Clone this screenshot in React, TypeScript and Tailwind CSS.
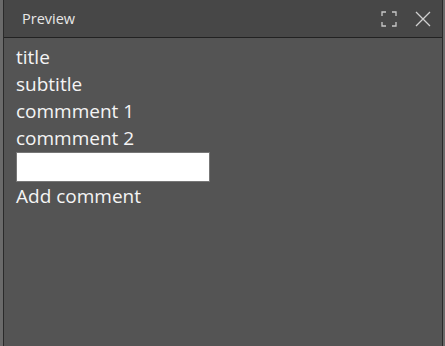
export default function App() {
  const items = ["title", "subtitle", "commment 1", "commment 2"];
  return (
    <div className="w-[445px] h-[346px] bg-[#6a6a6a] flex overflow-hidden" style={{ fontFamily: '"Open Sans", "Noto Sans", sans-serif' }}>
      <div className="ml-[3px] w-[440px] h-full flex flex-col border-x border-[#2a2a2a] bg-[#545454]">
        <div className="h-[38px] shrink-0 flex items-center bg-[#474747] border-b border-[#222222] pl-[18px] pr-[10px]">
          <span className="text-[14.5px] text-[#e8e8e8]">Preview</span>
          <div className="ml-auto flex items-center gap-[16px]">
            <svg width="18" height="18" viewBox="0 0 18 18" fill="none" stroke="#c8c8c8" strokeWidth="1.3">
              <path d="M2 6V2h4M12 2h4v4M16 12v4h-4M6 16H2v-4" />
            </svg>
            <svg width="18" height="18" viewBox="0 0 18 18" fill="none" stroke="#d0d0d0" strokeWidth="1.3">
              <path d="M2 2l14 14M16 2L2 16" />
            </svg>
          </div>
        </div>
        <div className="flex flex-col pl-[12px] pt-[6px] text-[19px] leading-[27px] text-[#f4f4f4]">
          {items.map((t) => (
            <div key={t}>{t}</div>
          ))}
          <input className="w-[194px] h-[30px] bg-white border border-[#777777] outline-none" />
          <div className="mt-[1px]">Add comment</div>
        </div>
      </div>
    </div>
  );
}
